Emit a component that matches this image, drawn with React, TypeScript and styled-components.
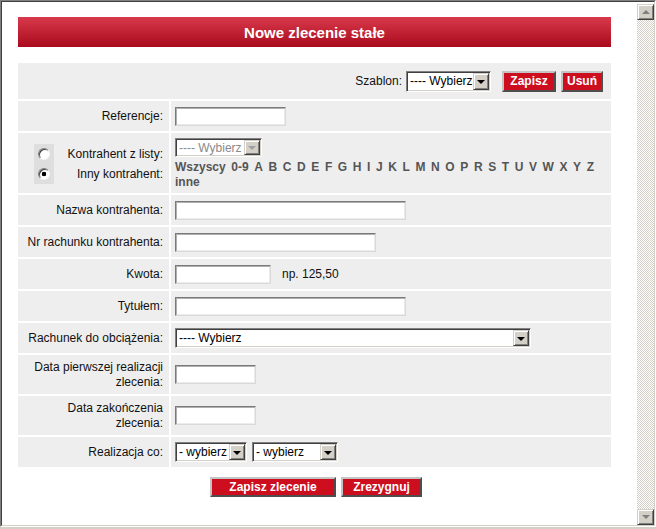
import React from "react";
import styled, { createGlobalStyle, css } from "styled-components";

const GlobalStyle = createGlobalStyle`
  html, body { margin: 0; padding: 0; background: #d4d0c8; }
  body { font-family: "Liberation Sans", Arial, sans-serif; font-size: 12px; color: #000; }
  * { box-sizing: border-box; }
`;

const Frame = styled.div`
  width: 656px;
  height: 527px;
  border: 1px solid;
  border-color: #808080 #ffffff #ffffff #808080;
`;

const FrameInner = styled.div`
  height: 100%;
  border: 1px solid;
  border-color: #404040 #d4d0c8 #d4d0c8 #404040;
  background: #fff;
  display: flex;
`;

const Content = styled.div`
  flex: 1;
  min-width: 0;
  padding: 15px 0 0 16px;
`;

const Scrollbar = styled.div`
  width: 17px;
  flex: none;
  display: flex;
  flex-direction: column;
  padding-top: 2px;
  background: #fff;
`;

const ScrollButton = styled.div<{ $dir: "up" | "down" }>`
  height: 16px;
  flex: none;
  background: #d4d0c8;
  border: 1px solid;
  border-color: #d4d0c8 #404040 #404040 #d4d0c8;
  box-shadow: inset 1px 1px 0 #fff, inset -1px -1px 0 #808080;
  display: flex;
  align-items: center;
  justify-content: center;
  &::after {
    content: "";
    border-left: 4px solid transparent;
    border-right: 4px solid transparent;
    ${(p) =>
      p.$dir === "up"
        ? "border-bottom: 4px solid #808080;"
        : "border-top: 4px solid #808080;"}
  }
`;

const ScrollTrack = styled.div`
  flex: 1;
  background-color: #fff;
  background-image: conic-gradient(#d4d0c8 0 25%, #fff 0 50%, #d4d0c8 0 75%, #fff 0);
  background-size: 2px 2px;
`;

const Header = styled.div`
  width: 593px;
  height: 30px;
  background: linear-gradient(#d83a4b, #ab0b1c);
  color: #fff;
  font: bold 15px "Liberation Sans", Arial, sans-serif;
  display: flex;
  align-items: center;
  justify-content: center;
`;

const FormGrid = styled.div`
  margin-top: 16px;
  width: 593px;
  display: grid;
  grid-template-columns: 151px 440px;
  gap: 2px;
`;

const Cell = styled.div`
  background: #eeeeee;
  min-height: 30px;
  display: flex;
  align-items: center;
`;

const LabelCell = styled(Cell)`
  justify-content: flex-end;
  text-align: right;
  padding: 5px 6px 4px;
  line-height: 15px;
  color: #111;
`;

const ValueCell = styled(Cell)<{ $stack?: boolean }>`
  padding: 0 4px;
  ${(p) =>
    p.$stack &&
    css`
      flex-direction: column;
      align-items: flex-start;
      padding: 5px 4px 3px;
    `}
`;

const ToolbarCell = styled(Cell)`
  grid-column: 1 / -1;
  min-height: 36px;
  justify-content: flex-end;
  padding-right: 8px;
`;

const ToolbarLabel = styled.span`
  margin-right: 4px;
  color: #111;
`;

const TextInput = styled.input<{ $w: number }>`
  width: ${(p) => p.$w}px;
  height: 19px;
  margin: 0;
  padding: 0 2px;
  font: 12px "Liberation Sans", Arial, sans-serif;
  background: #fff;
  border: 1px solid;
  border-color: #7a7a7a #d9d9d9 #d9d9d9 #7a7a7a;
  box-shadow: inset 1px 1px 0 #b0b0b0, inset -1px -1px 0 #ececec;
  outline: none;
`;

const Select = styled.div<{ $w: number; $h: number; $disabled?: boolean }>`
  display: inline-flex;
  flex: none;
  width: ${(p) => p.$w}px;
  height: ${(p) => p.$h}px;
  padding: 1px;
  background: #fff;
  border: 1px solid;
  border-color: #808080 #fff #fff #808080;
  box-shadow: inset 1px 1px 0 #404040, inset -1px -1px 0 #d4d0c8;
  color: ${(p) => (p.$disabled ? "#8a8a8a" : "#000")};
`;

const SelectText = styled.span`
  flex: 1;
  min-width: 0;
  padding-left: 2px;
  white-space: nowrap;
  overflow: hidden;
  display: flex;
  align-items: center;
`;

const SelectArrow = styled.span<{ $disabled?: boolean }>`
  width: 16px;
  flex: none;
  background: #d4d0c8;
  border: 1px solid;
  border-color: #d4d0c8 #404040 #404040 #d4d0c8;
  box-shadow: inset 1px 1px 0 #fff, inset -1px -1px 0 #808080;
  display: flex;
  align-items: center;
  justify-content: center;
  &::after {
    content: "";
    border-left: 4px solid transparent;
    border-right: 4px solid transparent;
    border-top: 4px solid ${(p) => (p.$disabled ? "#a0a0a0" : "#000")};
    margin-top: 1px;
  }
`;

const RedButton = styled.button<{ $w: number; $h: number }>`
  width: ${(p) => p.$w}px;
  height: ${(p) => p.$h}px;
  margin: 0;
  padding: 0;
  flex: none;
  background: #cc0e1f;
  color: #fff;
  font: bold 12px "Liberation Sans", Arial, sans-serif;
  border: 2px solid;
  border-color: #c4c4c4 #4e4e4e #4e4e4e #c4c4c4;
  cursor: pointer;
`;

const ToolbarGap = styled.span<{ $w: number }>`
  width: ${(p) => p.$w}px;
  flex: none;
`;

const RadioChooser = styled.div`
  display: flex;
  gap: 14px;
`;

const RadioColumn = styled.div`
  width: 20px;
  background: #dedede;
  display: flex;
  flex-direction: column;
`;

const RadioSlot = styled.div`
  height: 20px;
  display: flex;
  align-items: center;
  justify-content: center;
`;

const Radio = styled.span<{ $checked?: boolean }>`
  width: 12px;
  height: 12px;
  border-radius: 50%;
  background: #fff;
  border: 1px solid;
  border-color: #808080 #f4f4f4 #f4f4f4 #808080;
  box-shadow: inset 1px 1px 0 #404040;
  ${(p) =>
    p.$checked &&
    css`
      background: radial-gradient(circle, #000 0 2px, #fff 2.6px);
    `}
`;

const ChoiceLabels = styled.div`
  display: flex;
  flex-direction: column;
  align-items: flex-end;
`;

const ChoiceLabel = styled.div`
  height: 20px;
  line-height: 20px;
`;

const LetterRow = styled.div<{ $first?: boolean }>`
  display: flex;
  column-gap: 5.6px;
  font-weight: bold;
  color: #555;
  line-height: 15px;
  margin-top: ${(p) => (p.$first ? 3 : 0)}px;
`;

const LetterLink = styled.a`
  color: inherit;
  text-decoration: none;
  cursor: pointer;
`;

const Hint = styled.span`
  margin-left: 11px;
  color: #111;
`;

const SelectPair = styled.div`
  display: flex;
  gap: 5px;
`;

const ActionRow = styled.div`
  width: 593px;
  margin-top: 10px;
  padding-left: 3px;
  display: flex;
  justify-content: center;
  gap: 5px;
`;

type DropProps = { w: number; h: number; text: string; disabled?: boolean };

const Dropdown: React.FC<DropProps> = ({ w, h, text, disabled }) => (
  <Select $w={w} $h={h} $disabled={disabled}>
    <SelectText>{text}</SelectText>
    <SelectArrow $disabled={disabled} />
  </Select>
);

const letters = [
  "Wszyscy",
  "0-9",
  ..."A B C D E F G H I J K L M N O P R S T U V W X Y Z".split(" "),
];

export default function App() {
  return (
    <>
      <GlobalStyle />
      <Frame>
        <FrameInner>
          <Content>
            <Header>Nowe zlecenie stałe</Header>
            <FormGrid>
              <ToolbarCell>
                <ToolbarLabel>Szablon:</ToolbarLabel>
                <Dropdown w={85} h={21} text="---- Wybierz" />
                <ToolbarGap $w={11} />
                <RedButton $w={54} $h={21}>Zapisz</RedButton>
                <ToolbarGap $w={5} />
                <RedButton $w={42} $h={21}>Usuń</RedButton>
              </ToolbarCell>

              <LabelCell>Referencje:</LabelCell>
              <ValueCell>
                <TextInput $w={111} />
              </ValueCell>

              <LabelCell>
                <RadioChooser>
                  <RadioColumn>
                    <RadioSlot>
                      <Radio />
                    </RadioSlot>
                    <RadioSlot>
                      <Radio $checked />
                    </RadioSlot>
                  </RadioColumn>
                  <ChoiceLabels>
                    <ChoiceLabel>Kontrahent z listy:</ChoiceLabel>
                    <ChoiceLabel>Inny kontrahent:</ChoiceLabel>
                  </ChoiceLabels>
                </RadioChooser>
              </LabelCell>
              <ValueCell $stack>
                <Dropdown w={87} h={19} text="---- Wybierz" disabled />
                <LetterRow $first>
                  {letters.map((l) => (
                    <LetterLink key={l}>{l}</LetterLink>
                  ))}
                </LetterRow>
                <LetterRow>
                  <LetterLink>inne</LetterLink>
                </LetterRow>
              </ValueCell>

              <LabelCell>Nazwa kontrahenta:</LabelCell>
              <ValueCell>
                <TextInput $w={231} />
              </ValueCell>

              <LabelCell>Nr rachunku kontrahenta:</LabelCell>
              <ValueCell>
                <TextInput $w={201} />
              </ValueCell>

              <LabelCell>Kwota:</LabelCell>
              <ValueCell>
                <TextInput $w={96} />
                <Hint>np. 125,50</Hint>
              </ValueCell>

              <LabelCell>Tytułem:</LabelCell>
              <ValueCell>
                <TextInput $w={231} />
              </ValueCell>

              <LabelCell>Rachunek do obciążenia:</LabelCell>
              <ValueCell>
                <Dropdown w={356} h={20} text="---- Wybierz" />
              </ValueCell>

              <LabelCell>Data pierwszej realizacji zlecenia:</LabelCell>
              <ValueCell>
                <TextInput $w={81} />
              </ValueCell>

              <LabelCell>Data zakończenia zlecenia:</LabelCell>
              <ValueCell>
                <TextInput $w={81} />
              </ValueCell>

              <LabelCell>Realizacja co:</LabelCell>
              <ValueCell>
                <SelectPair>
                  <Dropdown w={72} h={20} text="- wybierz" />
                  <Dropdown w={86} h={20} text="- wybierz" />
                </SelectPair>
              </ValueCell>
            </FormGrid>
            <ActionRow>
              <RedButton $w={126} $h={20}>Zapisz zlecenie</RedButton>
              <RedButton $w={81} $h={20}>Zrezygnuj</RedButton>
            </ActionRow>
          </Content>
          <Scrollbar>
            <ScrollButton $dir="up" />
            <ScrollTrack />
            <ScrollButton $dir="down" />
          </Scrollbar>
        </FrameInner>
      </Frame>
    </>
  );
}
